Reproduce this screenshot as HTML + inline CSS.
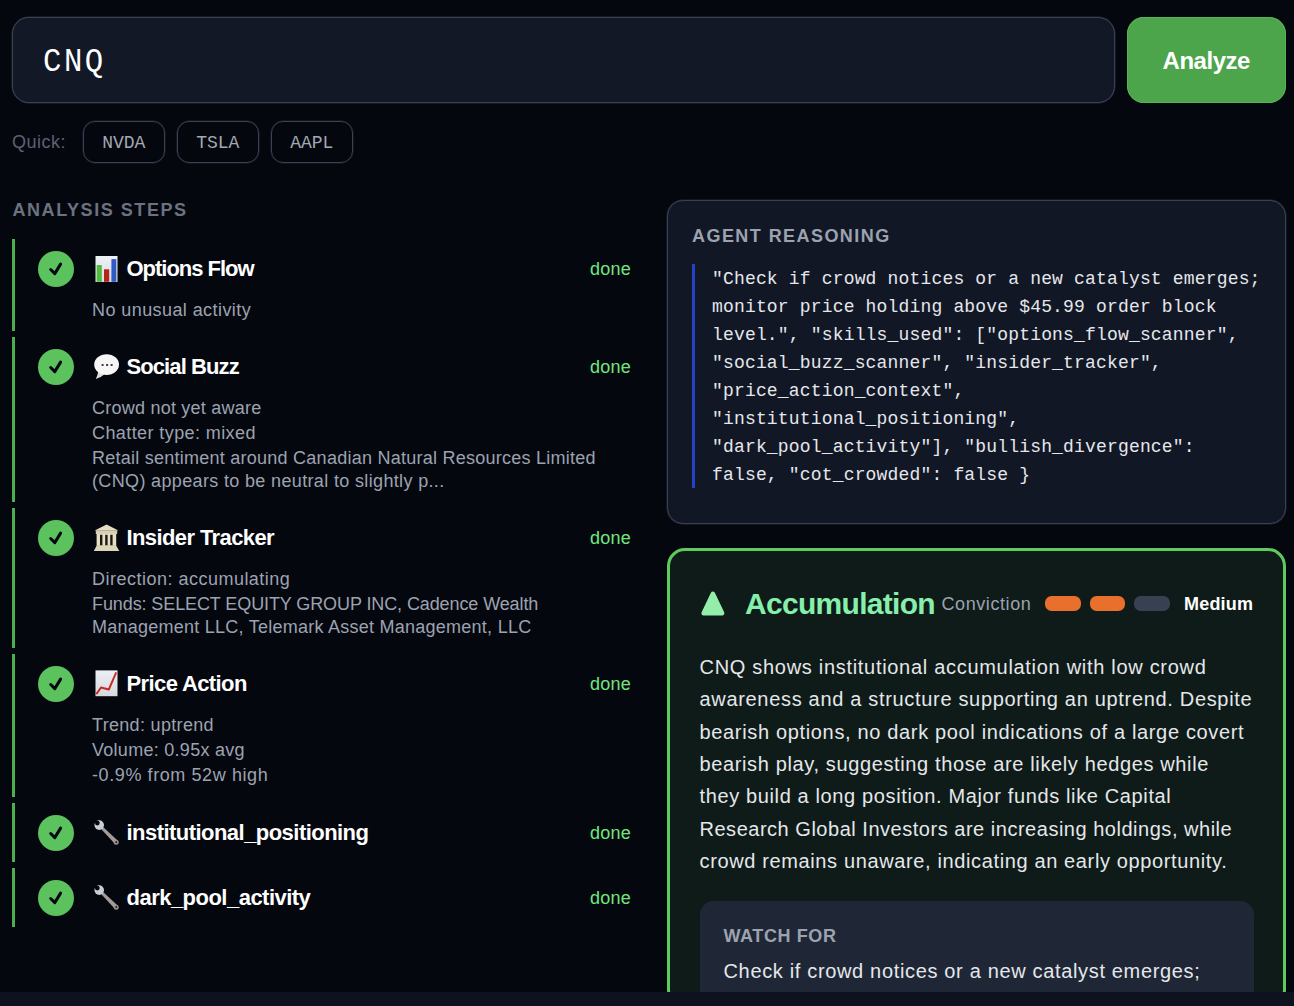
<!DOCTYPE html>
<html><head><meta charset="utf-8">
<style>
*{box-sizing:border-box;margin:0;padding:0}
html,body{width:1294px;height:1006px;overflow:hidden;background:#05070f;font-family:"Liberation Sans",sans-serif;color:#e5e7eb}
.abs{position:absolute}
.mono{font-family:"Liberation Mono",monospace}
#inp{left:12px;top:17px;width:1103px;height:85.5px;border:1px solid #3b4252;border-radius:17px;background:#121826;box-shadow:0 0 0 0.5px rgba(59,66,82,.6)}
#inp span{position:absolute;left:30px;top:23px;font-size:33px;line-height:44px;color:#fff;letter-spacing:2.67px;transform:scaleX(0.93);transform-origin:0 0}
#btn{left:1127px;top:17px;width:159px;height:85.5px;border-radius:17px;background:#4ca44b;box-shadow:inset 0 0 0 1px #56b555;color:#fff;font-weight:bold;font-size:24px;text-align:center;line-height:87px;letter-spacing:-0.48px;text-indent:-0.5px}
#quick{left:12px;top:131px;font-size:18px;line-height:22px;color:#5b6271;letter-spacing:0.48px}
.chip{top:121px;height:42px;width:81.5px;border:1px solid #3b4252;border-radius:12px;box-shadow:0 0 0 0.5px rgba(59,66,82,.5);font-size:18px;line-height:42.5px;text-align:center;color:#a3a8b3}
#steps-h{left:12.5px;top:199px;font-size:18px;line-height:22px;font-weight:bold;color:#6b7280;letter-spacing:1.55px}
#steps{left:12px;top:238.7px;width:631px}
.step{position:relative;border-left:3px solid #4caf4f;padding:12px 12px 11px 23px;margin-bottom:6px}
.row{display:flex;align-items:center;height:36px}
.ck{width:36px;height:36px;border-radius:50%;background:#5cc25e;flex:none;display:flex;align-items:center;justify-content:center}
.ttl{margin-left:19.5px;font-size:22px;font-weight:bold;color:#fff;display:flex;align-items:center;flex:1}
.ttl svg{margin-right:7px;flex:none;overflow:visible}
.done{font-size:18px;color:#72e67e;margin-right:0;position:relative;top:0.7px;letter-spacing:0.27px}
.desc{margin-top:11px;margin-left:54px;position:relative;top:1.2px}
.desc div{font-size:18px;line-height:22.5px;color:#9ca3af;white-space:nowrap}
.desc div+div{margin-top:2.5px}
.desc div.w{margin-top:0}
.white{white-space:nowrap}
#agent{left:667px;top:199.5px;width:619px;height:324.5px;border:1px solid #394050;border-radius:16px;background:#121726;box-shadow:0 0 0 0.5px rgba(57,64,80,.6)}
#agent h3{position:absolute;left:24px;top:24px;font-size:18px;line-height:22px;font-weight:bold;color:#9ca3af;letter-spacing:1.44px}
#agent .q{position:absolute;left:24px;top:63px;width:570px;border-left:3px solid #2640c4;padding:1.5px 0 0 17px;height:224px;font-size:18px;line-height:28px;color:#e5e7eb;white-space:pre;letter-spacing:0.17px}
#acc{left:667px;top:548.4px;width:619px;height:460px;border:3px solid #5dcb5d;border-radius:18px;background:#0f1b18}
#acc .hd{position:absolute;left:0;top:0;height:0;width:0}
#acc .big{position:absolute;left:75px;top:35.5px;letter-spacing:-0.7px;font-size:30px;font-weight:bold;color:#86efac;line-height:34px}
#acc .conv{position:absolute;left:271.5px;top:41.8px;font-size:18px;line-height:22px;color:#9ca3af;letter-spacing:0.58px}
.pill{position:absolute;top:44.9px;width:35.7px;height:14.7px;border-radius:6.5px}
#acc .med{position:absolute;left:514px;top:41.8px;font-size:18px;line-height:22px;font-weight:bold;color:#fff;letter-spacing:0.2px}
#acc p{position:absolute;left:29.5px;top:99.7px;width:600px;font-size:20px;line-height:32.3px;color:#e5e7eb}
#acc p span{display:block;white-space:nowrap}
#watch{position:absolute;left:29.5px;top:349.5px;width:554px;height:200px;border-radius:14px;background:#1f2736}
#watch h4{position:absolute;left:24px;top:24.2px;font-size:18px;line-height:22px;font-weight:bold;color:#9ca3af;letter-spacing:0.6px}
#watch div{position:absolute;left:24px;top:54.5px;font-size:20px;line-height:32px;color:#e5e7eb;white-space:nowrap;letter-spacing:0.66px}
#foot{left:0;top:992px;width:1294px;height:14px;background:#0e111e}
</style></head><body>
<div id="inp" class="abs"><span class="mono">CNQ</span></div>
<div id="btn" class="abs">Analyze</div>
<div id="quick" class="abs">Quick:</div>
<div class="chip abs mono" style="left:83px">NVDA</div>
<div class="chip abs mono" style="left:177px">TSLA</div>
<div class="chip abs mono" style="left:271px">AAPL</div>
<div id="steps-h" class="abs">ANALYSIS STEPS</div>
<div id="steps" class="abs">
  <div class="step"><div class="row"><div class="ck"><svg width="16" height="16" viewBox="0 0 16 16"><path d="M2.7 8.5 L6.8 12.6 L12.6 3.1" fill="none" stroke="#05070f" stroke-width="3" stroke-linecap="round" stroke-linejoin="round"/></svg></div>
    <div class="ttl"><svg width="26" height="26" viewBox="0 0 26 26"><defs><linearGradient id="gb" x1="0" y1="0" x2="0" y2="1"><stop offset="0" stop-color="#eef1f6"/><stop offset="1" stop-color="#d9dde5"/></linearGradient></defs><rect x="1.5" y="0" width="22" height="26" fill="url(#gb)"/><rect x="2.7" y="9" width="5.1" height="16.8" fill="#52ba3c"/><rect x="10" y="13.3" width="5.2" height="12.5" fill="#b3251b"/><rect x="17.4" y="3.1" width="4.9" height="22.7" fill="#2f5cc4"/></svg><span style="letter-spacing:-1.02px">Options Flow</span></div><div class="done">done</div></div>
    <div class="desc"><div style="letter-spacing:0.42px">No unusual activity</div></div></div>
  <div class="step"><div class="row"><div class="ck"><svg width="16" height="16" viewBox="0 0 16 16"><path d="M2.7 8.5 L6.8 12.6 L12.6 3.1" fill="none" stroke="#05070f" stroke-width="3" stroke-linecap="round" stroke-linejoin="round"/></svg></div>
    <div class="ttl"><svg width="26" height="26" viewBox="0 0 26 26"><path d="M4.5 16.5 Q3.5 22 1.8 25 Q7 23.5 10.5 20.2 Z" fill="#dcdcdc"/><ellipse cx="12.6" cy="10.6" rx="12.4" ry="10.4" fill="#f6f6f6"/><rect x="7.6" y="10" width="2" height="2" fill="#3f3f3f"/><rect x="12.1" y="10" width="2" height="2" fill="#3f3f3f"/><rect x="16.6" y="10" width="2" height="2" fill="#3f3f3f"/></svg><span style="letter-spacing:-0.91px">Social Buzz</span></div><div class="done">done</div></div>
    <div class="desc"><div style="letter-spacing:0.23px">Crowd not yet aware</div><div style="letter-spacing:0.41px">Chatter type: mixed</div><div style="letter-spacing:0.25px">Retail sentiment around Canadian Natural Resources Limited</div><div class="w" style="letter-spacing:0.35px">(CNQ) appears to be neutral to slightly p...</div></div></div>
  <div class="step"><div class="row"><div class="ck"><svg width="16" height="16" viewBox="0 0 16 16"><path d="M2.7 8.5 L6.8 12.6 L12.6 3.1" fill="none" stroke="#05070f" stroke-width="3" stroke-linecap="round" stroke-linejoin="round"/></svg></div>
    <div class="ttl"><svg width="26" height="26" viewBox="0 0 26 26"><path d="M12.6 -0.6 L24.4 5.4 L0.6 5.4 Z" fill="#e4ddc2"/><rect x="1.8" y="5.3" width="21.4" height="3.7" fill="#d8d0b3"/><rect x="2.6" y="8.9" width="19.6" height="12" fill="#e6dfc5"/><rect x="6" y="9.8" width="2.4" height="10.5" fill="#1c1912"/><rect x="11.2" y="9.8" width="2.4" height="10.5" fill="#1c1912"/><rect x="16.2" y="9.8" width="2.4" height="10.5" fill="#1c1912"/><path d="M2.6 20.8 L22.3 20.8 L25.3 26 L-0.2 26 Z" fill="#ddd5b9"/></svg><span style="letter-spacing:-0.6px">Insider Tracker</span></div><div class="done">done</div></div>
    <div class="desc"><div style="letter-spacing:0.49px">Direction: accumulating</div><div style="letter-spacing:-0.1px">Funds: SELECT EQUITY GROUP INC, Cadence Wealth</div><div class="w" style="letter-spacing:0.25px">Management LLC, Telemark Asset Management, LLC</div></div></div>
  <div class="step"><div class="row"><div class="ck"><svg width="16" height="16" viewBox="0 0 16 16"><path d="M2.7 8.5 L6.8 12.6 L12.6 3.1" fill="none" stroke="#05070f" stroke-width="3" stroke-linecap="round" stroke-linejoin="round"/></svg></div>
    <div class="ttl"><svg width="26" height="26" viewBox="0 0 26 26"><defs><linearGradient id="gr" x1="0" y1="0" x2="0" y2="1"><stop offset="0" stop-color="#eceff4"/><stop offset="1" stop-color="#d6d9e0"/></linearGradient></defs><rect x="1.5" y="-0.6" width="22" height="25.8" fill="url(#gr)"/><path d="M2.9 22.4 L7 16.5 L14.8 18.5 L21.9 2.1" fill="none" stroke="#c42a22" stroke-width="1.9" stroke-linejoin="round" stroke-linecap="round"/></svg><span style="letter-spacing:-0.61px">Price Action</span></div><div class="done">done</div></div>
    <div class="desc"><div style="letter-spacing:0.32px">Trend: uptrend</div><div style="letter-spacing:0.28px">Volume: 0.95x avg</div><div style="letter-spacing:0.59px">-0.9% from 52w high</div></div></div>
  <div class="step"><div class="row"><div class="ck"><svg width="16" height="16" viewBox="0 0 16 16"><path d="M2.7 8.5 L6.8 12.6 L12.6 3.1" fill="none" stroke="#05070f" stroke-width="3" stroke-linecap="round" stroke-linejoin="round"/></svg></div>
    <div class="ttl"><svg width="26" height="26" viewBox="0 0 26 26"><path d="M8.6 6.6 L23.6 20.6 L20.6 23.6 L6.6 8.6 Z" fill="#a39b9b"/><circle cx="22.2" cy="22.2" r="2.5" fill="#9a908c"/><circle cx="22.3" cy="22.1" r="0.95" fill="#05070f"/><circle cx="5.2" cy="5.1" r="4.8" fill="#c9cdd5"/><circle cx="3.3" cy="3.1" r="2.4" fill="#05070f"/><path d="M3.3 0.7 L0.9 3.1 L-2 0.2 L0.4 -2.2 Z" fill="#05070f"/></svg><span style="letter-spacing:-0.54px">institutional_positioning</span></div><div class="done">done</div></div></div>
  <div class="step"><div class="row"><div class="ck"><svg width="16" height="16" viewBox="0 0 16 16"><path d="M2.7 8.5 L6.8 12.6 L12.6 3.1" fill="none" stroke="#05070f" stroke-width="3" stroke-linecap="round" stroke-linejoin="round"/></svg></div>
    <div class="ttl"><svg width="26" height="26" viewBox="0 0 26 26"><path d="M8.6 6.6 L23.6 20.6 L20.6 23.6 L6.6 8.6 Z" fill="#a39b9b"/><circle cx="22.2" cy="22.2" r="2.5" fill="#9a908c"/><circle cx="22.3" cy="22.1" r="0.95" fill="#05070f"/><circle cx="5.2" cy="5.1" r="4.8" fill="#c9cdd5"/><circle cx="3.3" cy="3.1" r="2.4" fill="#05070f"/><path d="M3.3 0.7 L0.9 3.1 L-2 0.2 L0.4 -2.2 Z" fill="#05070f"/></svg><span style="letter-spacing:-0.52px">dark_pool_activity</span></div><div class="done">done</div></div></div>
</div>
<div id="agent" class="abs"><h3>AGENT REASONING</h3>
<div class="q mono">"Check if crowd notices or a new catalyst emerges;
monitor price holding above $45.99 order block
level.", "skills_used": ["options_flow_scanner",
"social_buzz_scanner", "insider_tracker",
"price_action_context",
"institutional_positioning",
"dark_pool_activity"], "bullish_divergence":
false, "cot_crowded": false }</div></div>
<div id="acc" class="abs">
  <div class="hd">
    <svg class="abs" style="left:31px;top:40.2px;overflow:visible" width="24" height="24" viewBox="0 0 24 24"><path d="M11.9 1.8 L21.2 21.3 L2.6 21.3 Z" fill="#94eeaa" stroke="#94eeaa" stroke-width="4.4" stroke-linejoin="round"/></svg>
    <div class="big">Accumulation</div>
    <div class="conv">Conviction</div>
    <div class="pill" style="left:375.3px;background:#e8702c"></div>
    <div class="pill" style="left:419.8px;background:#e8702c"></div>
    <div class="pill" style="left:464px;background:#374151"></div>
    <div class="med">Medium</div>
  </div>
  <p><span style="letter-spacing:0.7px">CNQ shows institutional accumulation with low crowd</span><span style="letter-spacing:0.68px">awareness and a structure supporting an uptrend. Despite</span><span style="letter-spacing:0.66px">bearish options, no dark pool indications of a large covert</span><span style="letter-spacing:0.63px">bearish play, suggesting those are likely hedges while</span><span style="letter-spacing:0.63px">they build a long position. Major funds like Capital</span><span style="letter-spacing:0.52px">Research Global Investors are increasing holdings, while</span><span style="letter-spacing:0.63px">crowd remains unaware, indicating an early opportunity.</span></p>
  <div id="watch"><h4>WATCH FOR</h4><div>Check if crowd notices or a new catalyst emerges;</div></div>
</div>
<div id="foot" class="abs"></div>
</body></html>
